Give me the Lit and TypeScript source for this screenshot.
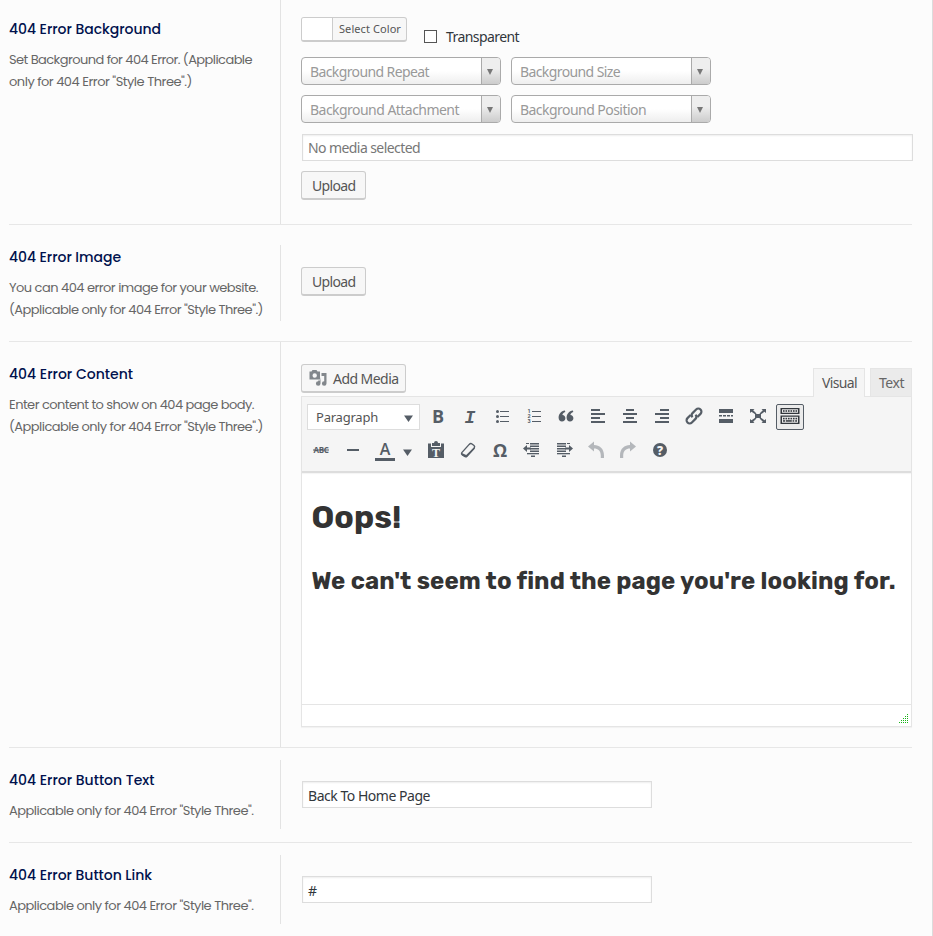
import { LitElement, html, svg, css, TemplateResult } from "lit";
import { customElement, property } from "lit/decorators.js";

/** A single line of text that spreads its letters to fill a given width. */
@customElement("fit-line")
class FitLine extends LitElement {
  @property({ type: Number }) width = 0;

  static styles = css`
    :host { display: block; white-space: pre; }
    .run { display: inline-block; }
  `;

  render() {
    return html`<span class="run"><slot></slot></span>`;
  }

  firstUpdated() {
    const run = this.renderRoot.querySelector(".run") as HTMLElement;
    const count = (this.textContent ?? "").trim().length;
    const natural = run.getBoundingClientRect().width;
    if (this.width && count) run.style.letterSpacing = (this.width - natural) / count + "px";
  }
}

const line = (text: string, width: number, cls = "") =>
  html`<fit-line class=${cls} .width=${width}>${text}</fit-line>`;

const bars = (spec: number[][]) =>
  spec.map(([x, y, w, h]) => svg`<rect x=${x} y=${y} width=${w} height=${h} />`);

const icons: Record<string, TemplateResult> = {
  bold: svg`<text class="glyph b" x="10" y="16.5">B</text>`,
  italic: svg`<text class="glyph i" x="10" y="16.5">I</text>`,
  ul: svg`<circle cx="5.5" cy="5.5" r="1.5"/><circle cx="5.5" cy="10.5" r="1.5"/><circle cx="5.5" cy="15.5" r="1.5"/>${bars([[8, 5, 9, 1], [8, 10, 9, 1], [8, 15, 9, 1]])}`,
  ol: svg`<text class="num" x="3.5" y="7">1</text><text class="num" x="3.5" y="12.2">2</text><text class="num" x="3.5" y="17.4">3</text>${bars([[8, 5, 9, 1], [8, 10, 9, 1], [8, 15, 9, 1]])}`,
  quote: svg`<path d="M8.900 4.600C5 5.200 2.600 8 2.600 11.700C2.600 14 4 15.600 6 15.600C8 15.600 9.400 14.200 9.400 12.300C9.400 10.400 8.200 9.100 6.400 9.100C6.600 7.600 7.500 6.500 9.300 6ZM16.900 4.600C13 5.200 10.600 8 10.600 11.700C10.600 14 12 15.600 14 15.600C16 15.600 17.400 14.200 17.400 12.300C17.400 10.400 16.200 9.100 14.400 9.100C14.600 7.600 15.500 6.500 17.300 6Z"/>`,
  left: svg`${bars([[3, 3, 9, 2], [3, 7, 14, 2], [3, 11, 9, 2], [3, 15, 14, 2]])}`,
  center: svg`${bars([[6, 3, 8, 2], [3, 7, 14, 2], [6, 11, 8, 2], [3, 15, 14, 2]])}`,
  right: svg`${bars([[8, 3, 9, 2], [3, 7, 14, 2], [8, 11, 9, 2], [3, 15, 14, 2]])}`,
  link: svg`<g class="stroke" transform="rotate(-45 10 10)"><path d="M8.300 6.900H3.900a3.100 3.100 0 0 0 0 6.200H9a3.100 3.100 0 0 0 3-3"/><path d="M11.700 13.100H16.100a3.100 3.100 0 0 0 0-6.200H11a3.100 3.100 0 0 0-3 3"/></g>`,
  more: svg`${bars([[3, 3, 14, 4], [3, 9, 3, 1.5], [7, 9, 3, 1.5], [11, 9, 3, 1.5], [15, 9, 2, 1.5], [3, 13, 14, 4]])}`,
  full: svg`<rect x="7" y="8" width="6" height="4"/><path d="M2 3h4.500L5.200 4.300L8.500 7.500L7.500 8.500L3.500 5.800L2 7zM18 3h-4.500l1.300 1.300L11.500 7.500l1 1l4-2.700L18 7zM2 17h4.500l-1.300-1.300L8.500 12.500l-1-1l-4 2.700L2 13zM18 17h-4.500l1.300-1.300L11.500 12.500l1-1l4 2.700L18 13z"/>`,
  sink: svg`<path fill-rule="evenodd" d="M.5 2h19v6H.500zM2 3.200V6.800H18V3.200zM.5 9.500h19V18H.500zM2 10.800v5.900h16V10.800z"/>${bars([3, 5.5, 8, 10.5, 13, 15.5].map((x) => [x, 4.2, 1.6, 1.6]))}${bars([3, 5.5, 8, 10.5, 13, 15.5].map((x) => [x, 11.8, 1.6, 1.6]))}${bars([[3, 14.2, 2, 1.5], [5.8, 14.2, 6, 1.5], [12.6, 14.2, 1.6, 1.5], [15.2, 14.2, 1.8, 1.5]])}`,
  strike: svg`<text class="glyph abc" x="10" y="13">ABC</text><rect x="2" y="9.500" width="16" height="1"/>`,
  hr: svg`<rect x="4" y="9" width="12" height="2"/>`,
  color: svg`<text class="glyph a" x="10" y="15">A</text><rect x="0" y="18" width="20" height="3"/>`,
  paste: svg`<path d="M2 3.500H5V7H15V3.500H18V18H2zM6 6V3H8a2 2 0 0 1 4 0h2V6z"/><text class="glyph t" x="10" y="16.500">T</text>`,
  eraser: svg`<path class="stroke thin" d="M3.800 12.600L11.200 4.400Q12.600 3 14 4L16 5.500Q17.200 6.600 16.200 8L8.800 16.200Q7.800 17.200 6.600 16.500L4.200 14.800Q3 13.800 3.800 12.600z"/><path d="M3.200 12.800L8.200 15L16.800 6.800L16.500 9L8.600 17.600L3.900 15.300z"/>`,
  omega: svg`<text class="glyph o" x="10" y="17">Ω</text>`,
  outdent: svg`${bars([[8, 3, 9, 1.5], [4, 3, 3, 1], [8, 5.5, 9, 1.5], [8, 8, 9, 1.5], [8, 10.5, 9, 1.5], [5, 13, 12, 1.3], [9, 15.5, 4, 1.5]])}<path d="M1 8.500L5 5V7.500H9V9.500H5V12z"/>`,
  indent: svg`${bars([[3, 3, 9, 1.5], [13, 3, 3, 1], [3, 5.5, 9, 1.5], [3, 8, 9, 1.5], [3, 10.5, 9, 1.5], [3, 13, 13, 1.3], [8, 15.5, 4, 1.5]])}<path d="M19 8.500L15 5V7.500H11V9.500H15V12z"/>`,
  undo: svg`<path d="M8 1.500V5C13.500 5 18 8.500 18 15.500V18H14.800V15.500C14.800 11 12 8.500 8 8.500V11.500L2 6.500z"/>`,
  redo: svg`<path d="M12 1.500V5C6.500 5 2 8.500 2 15.500V18H5.200V15.500C5.200 11 8 8.500 12 8.500V11.500L18 6.500z"/>`,
  help: svg`<circle cx="10" cy="10" r="7"/><text class="glyph q" x="10" y="14.500">?</text>`,
};

const icon = (name: string) =>
  html`<svg class="icon ${name}" viewBox="0 0 20 20" width="20" height="20">${icons[name]}</svg>`;

const caret = () => html`<svg class="caret" width="9" height="7" viewBox="0 0 9 7"><path d="M0 0.500H9L4.500 7z"/></svg>`;

interface Row {
  kind: string;
  title: [string, number];
  notes: [string, number][];
  body: TemplateResult;
}

@customElement("app-root")
class AppRoot extends LitElement {
  static styles = css`
    :host {
      display: block;
      height: 936px;
      overflow: hidden;
      background: #fcfcfc;
      font: 14px/20px "Noto Sans", "Open Sans", sans-serif;
      color: #32373c;
    }
    * { box-sizing: border-box; }
    .page { width: 933px; height: 936px; padding: 0 20px 0 9px; border-right: 1px solid #dcdcdc; overflow: hidden; }
    .row { display: grid; grid-template-columns: 272px 1fr; border-bottom: 1px solid #e7e7e7; }
    .row.background { height: 225px; }
    .row.image { height: 117px; padding: 20px 0 21px; }
    .row.content { height: 406px; }
    .row.link { height: 95px; padding: 12px 0 13px; }
    .label { border-right: 1px solid #e3e3e3; font-family: Poppins, Inter, "Open Sans", sans-serif; }
    .background .label { padding-top: 19px; }
    .image .label { padding-top: 2px; }
    .content .label { padding-top: 22px; }
    .link .label { padding-top: 10px; }
    .title { color: #00114d; font-size: 14px; font-weight: 500; line-height: 20px; margin-bottom: 10px; }
    .note { color: #666; font-size: 13px; line-height: 22px; }
    .field { padding-left: 20px; width: 632px; }
    .background .field { padding-top: 17px; }
    .image .field { padding-top: 22px; }
    .content .field { padding-top: 22px; }
    .link .field { padding: 21px 0 0 21px; }

    .colors { display: flex; gap: 17px; height: 40px; }
    .picker { display: flex; width: 106px; height: 25px; border: 1px solid #ccc; border-bottom-width: 2px; border-radius: 3px; overflow: hidden; background: #f7f7f7; font-size: 11px; line-height: 22px; color: #555; }
    .swatch { width: 31px; background: #fff; border-right: 1px solid #ccc; margin-right: 6px; }
    .check { display: flex; gap: 9px; padding-top: 10px; }
    .box { width: 13px; height: 13px; margin-top: 3px; border: 1px solid #555; background: #fff; }
    .selects { display: grid; grid-template-columns: 200px 200px; gap: 10px; }
    .select { display: flex; height: 28px; border: 1px solid #aaa; border-radius: 4px; background: linear-gradient(#fff 20%, #fff 50%, #eee 100%); color: #999; line-height: 28px; padding-left: 8px; overflow: hidden; }
    .drop { display: flex; align-items: center; justify-content: center; width: 19px; margin-left: auto; padding-right: 2px; border-left: 1px solid #aaa; background: linear-gradient(#eee 40%, #ccc); }
    .drop svg { fill: #777; }
    .input { height: 27px; border: 1px solid #ddd; background: #fff; box-shadow: inset 0 1px 2px rgba(0,0,0,.07); padding-left: 5px; line-height: 28px; }
    .media { width: 611px; margin: 11px 0 10px 1px; color: #777; line-height: 26px; }
    .short { width: 350px; }
    .button { display: flex; height: 29px; border: 1px solid #ccc; border-bottom-width: 2px; border-radius: 3px; background: #f7f7f7; color: #555; padding-left: 10px; line-height: 28px; }
    .upload { width: 65px; }
    .background .upload { line-height: 27px; }

    .tools { display: flex; justify-content: space-between; height: 32px; width: 611px; }
    .add { width: 105px; padding-left: 7px; gap: 5px; line-height: 27px; }
    .add svg { margin-top: 4px; fill: #82878c; flex: none; }
    .tabs { display: flex; gap: 5px; padding-top: 4px; }
    .tab { height: 28px; border: 1px solid #e5e5e5; border-bottom: 0; padding-left: 8px; line-height: 27px; color: #666; background: #ebebeb; width: 42px; }
    .tab.active { width: 52px; height: 29px; background: #f5f5f5; color: #555; position: relative; z-index: 1; }
    .editor { width: 611px; height: 331px; border: 1px solid #e5e5e5; background: #fff; box-shadow: 0 1px 1px rgba(0,0,0,.04); }
    .toolbar { height: 76px; border-bottom: 2px solid #ddd; background: #f5f5f5; box-shadow: 0 1px 1px rgba(0,0,0,.04); padding: 5px 0 0 4px; }
    .strip { display: flex; height: 34px; gap: 4px; }
    .strip.second { padding-left: 1px; }
    .format { display: flex; align-items: center; width: 113px; height: 26px; margin: 2px 0 0 1px; border: 1px solid #ddd; background: #fff; padding: 0 6px 0 8px; color: #555; font-size: 13px; }
    .format .caret { margin: 2px 0 0 auto; }
    .caret { fill: #555d66; flex: none; }
    .tool { display: flex; align-items: center; justify-content: center; width: 28px; height: 26px; border: 1px solid transparent; border-radius: 2px; margin-top: 2px; }
    .tool.on { border-color: #555d66; background: #ebebeb; }
    .tool.dim { opacity: .4; }
    .more-colors { width: 16px; display: flex; align-items: center; margin: 3px 0 5px -1px; padding-left: 1px; }
    .icon { fill: #555d66; flex: none; overflow: visible; margin-top: -2px; }
    .on .icon { fill: #32373c; }
    .stroke { fill: none; stroke: #555d66; stroke-width: 2.2; }
    .thin { stroke-width: 1.4; }
    .glyph { text-anchor: middle; font-weight: 700; font-family: "Open Sans", sans-serif; }
    .b { font-size: 18px; }
    .i { font: italic 700 18px "Liberation Mono", monospace; }
    .num { font: 700 5.5px Roboto, sans-serif; }
    .abc { font-size: 8px; letter-spacing: -.3px; }
    .a { font-size: 16px; font-weight: 600; }
    .t { font: 700 12px "Liberation Serif", serif; fill: #f5f5f5; }
    .o { font-size: 18px; font-weight: 700; }
    .q { font-size: 12px; font-weight: 800; fill: #f5f5f5; }
    .doc { height: 231px; padding: 23px 0 0 9.5px; color: #333; font-family: Rubik, Roboto, sans-serif; font-weight: 700; }
    .h1 { font-size: 32px; line-height: 42px; }
    .h2 { font-size: 24px; line-height: 32px; margin-top: 27px; }
    .status { display: flex; justify-content: flex-end; align-items: flex-end; height: 23px; border-top: 1px solid #e5e5e5; padding: 0 3px 4px 0; }
    .status svg { fill: #18b418; shape-rendering: crispEdges; }
  `;

  private select(text: string, width: number) {
    return html`<div class="select">${line(text, width)}<span class="drop">
      <svg width="6" height="7" viewBox="0 0 6 7"><path d="M0 1H6L3 7z"/></svg></span></div>`;
  }

  private tool(name: string, state = "") {
    return html`<span class="tool ${state}">${icon(name)}</span>`;
  }

  private rows(): Row[] {
    const applicable: [string, number] = ['Applicable only for 404 Error "Style Three".', 244.5];
    const bracketed: [string, number] = ['(Applicable only for 404 Error "Style Three".)', 254];
    return [
      {
        kind: "background",
        title: ["404 Error Background", 152],
        notes: [["Set Background for 404 Error. (Applicable", 243], ['only for 404 Error "Style Three".)', 183]],
        body: html`
          <div class="colors">
            <div class="picker"><span class="swatch"></span>${line("Select Color", 62)}</div>
            <div class="check"><span class="box"></span>${line("Transparent", 73)}</div>
          </div>
          <div class="selects">
            ${this.select("Background Repeat", 119)}${this.select("Background Size", 100)}
            ${this.select("Background Attachment", 149)}${this.select("Background Position", 126)}
          </div>
          <div class="input media">${line("No media selected", 112)}</div>
          <div class="button upload">${line("Upload", 43.5)}</div>`,
      },
      {
        kind: "image",
        title: ["404 Error Image", 112],
        notes: [["You can 404 error image for your website.", 249], bracketed],
        body: html`<div class="button upload">${line("Upload", 43.5)}</div>`,
      },
      {
        kind: "content",
        title: ["404 Error Content", 124],
        notes: [["Enter content to show on 404 page body.", 245], bracketed],
        body: this.editor(),
      },
      {
        kind: "link",
        title: ["404 Error Button Text", 145.5],
        notes: [applicable],
        body: html`<div class="input short">${line("Back To Home Page", 122)}</div>`,
      },
      {
        kind: "link",
        title: ["404 Error Button Link", 143],
        notes: [applicable],
        body: html`<div class="input short">${line("#", 8)}</div>`,
      },
    ];
  }

  private editor() {
    const dots = [0, 1, 2, 3, 4].flatMap((r) =>
      Array.from({ length: r + 1 }, (_, c) => [8 - c * 2, r * 2, 1, 1]));
    return html`
      <div class="tools">
        <div class="button add">
          <svg width="19" height="19" viewBox="0 0 19 19">
            <path fill-rule="evenodd" d="M.5 2.500H2.500L3.500 1H7.500L8.500 2.500H11V10.500H.500zM5.700 4.300a2.200 2.200 0 1 0 0 4.400a2.200 2.200 0 0 0 0-4.400z"/>
            <path d="M12.500 4H17.500V14.500a2.300 2.300 0 1 1-2.300-2.300V7H12.500zM11.500 8V14.500a2.300 2.300 0 1 1-2.300-2.300V11.500H11z"/>
          </svg>
          ${line("Add Media", 65.5)}
        </div>
        <div class="tabs">
          <div class="tab active">${line("Visual", 35)}</div>
          <div class="tab">${line("Text", 25)}</div>
        </div>
      </div>
      <div class="editor">
        <div class="toolbar">
          <div class="strip">
            <div class="format">${line("Paragraph", 62)}${caret()}</div>
            ${["bold", "italic", "ul", "ol", "quote", "left", "center", "right", "link", "more", "full"].map((n) => this.tool(n))}
            ${this.tool("sink", "on")}
          </div>
          <div class="strip second">
            ${this.tool("strike")}${this.tool("hr")}${this.tool("color")}
            <span class="more-colors">${caret()}</span>
            ${["paste", "eraser", "omega", "outdent", "indent"].map((n) => this.tool(n))}
            ${this.tool("undo", "dim")}${this.tool("redo", "dim")}${this.tool("help")}
          </div>
        </div>
        <div class="doc">
          ${line("Oops!", 90, "h1")}
          ${line("We can't seem to find the page you're looking for.", 583, "h2")}
        </div>
        <div class="status"><svg width="9" height="9" viewBox="0 0 9 9">${bars(dots)}</svg></div>
      </div>`;
  }

  render() {
    return html`<div class="page">${this.rows().map((r) => html`
      <section class="row ${r.kind}">
        <div class="label">
          ${line(r.title[0], r.title[1], "title")}
          ${r.notes.map(([t, w]) => line(t, w, "note"))}
        </div>
        <div class="field">${r.body}</div>
      </section>`)}</div>`;
  }
}
